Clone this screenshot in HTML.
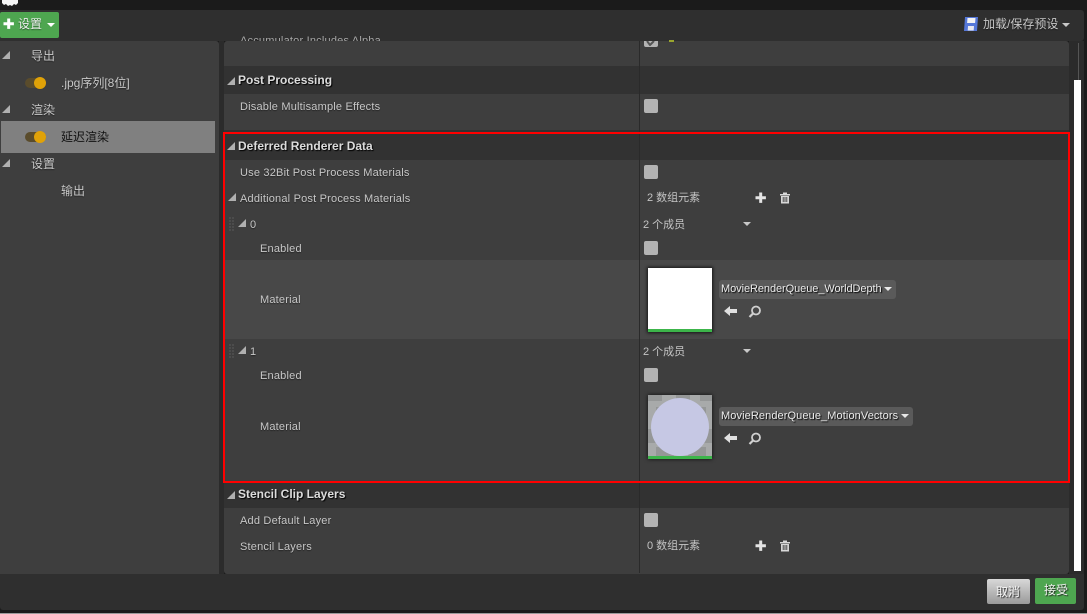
<!DOCTYPE html>
<html><head><meta charset="utf-8">
<style>
html,body{margin:0;padding:0;background:#1b1b1b;}
#r{position:relative;width:1087px;height:614px;overflow:hidden;background:#1b1b1b;font-family:"Liberation Sans","Noto Sans CJK SC",sans-serif;font-size:11px;color:#c8c8c8;}
#r div,#r span.a,#r svg{position:absolute;}
.t{white-space:nowrap;line-height:14px;text-shadow:0 1px 1px rgba(0,0,0,.45);}
.w{letter-spacing:.2px;}
.h{font-weight:bold;font-size:12px;color:#dcdcdc;text-shadow:1px 1px 1px #000;white-space:nowrap;line-height:14px;}
.c{font-size:12px;color:#c4c4c4;white-space:nowrap;line-height:16px;}
.sec{left:224px;width:845px;background:#323232;}
.row{left:224px;width:845px;background:#3e3e3e;}
.cb{width:14px;height:14px;background:#b3b3b3;border-radius:2px;left:644px;}
.tri{width:0;height:0;border-style:solid;border-width:0 0 8px 8px;border-color:transparent transparent #b0b0b0 transparent;}
.dn{width:0;height:0;border-style:solid;border-width:4px 4px 0 4px;border-color:#c8c8c8 transparent transparent transparent;}
.sw{width:21px;height:10px;border-radius:5px;background:#5a4c2c;}
.sw2{width:12px;height:12px;border-radius:6px;background:#e0a208;}
.lbl{font-size:11px;color:#ececec;text-shadow:1px 1px 1px #000;white-space:nowrap;line-height:14px;}
.drop{background:#5a5a5a;border-radius:3px;height:19px;}
</style></head><body><div id="r">

<!-- logo fragment -->
<svg style="left:0;top:0" width="20" height="8"><path d="M2 0h16v3l-2 2-2-1-2 2-2-1-2 1-2-2-2 1-2-2z" fill="#f4f4f4"/></svg>

<!-- toolbar -->
<div style="left:0;top:10px;width:1084px;height:31px;background:#2f2f2f;border-radius:0 3px 3px 0"></div>
<div style="left:0;top:12px;width:59px;height:26px;background:#4ea650;border-radius:2px;"></div>
<svg style="left:3px;top:18px" width="12" height="12"><path d="M4.200.5h3v3.700h3.700v3h-3.700v3.700h-3v-3.700H.5v-3h3.700z" fill="#fff"/></svg>
<div class="t" style="left:18px;top:17px;font-size:12px;color:#eee">设置</div>
<div class="dn" style="left:47px;top:23px;border-color:#fff transparent transparent transparent"></div>

<svg style="left:963px;top:16px" width="16" height="16"><path d="M2 1h13l-1 14H1z" fill="#5577d8"/><path d="M4.500 2h8l-.4 5h-8z" fill="#f4f4f4"/><path d="M5 10h6l-.3 4.500H4.700z" fill="#e8e8f0"/></svg>
<div class="t" style="left:983px;top:17px;font-size:12px;color:#c8c8c8">加载/保存预设</div>
<div class="dn" style="left:1062px;top:23px;"></div>

<!-- left panel -->
<div style="left:0;top:41px;width:219px;height:533px;background:#3e3e3e;border-radius:0 3px 0 0"></div>
<div style="left:219px;top:41px;width:5px;height:533px;background:#2b2b2b"></div>
<div style="left:1px;top:121px;width:214px;height:32px;background:#808080"></div>
<div class="tri" style="left:2px;top:51px"></div>
<div class="t" style="left:31px;top:49px;font-size:12px">导出</div>
<div class="sw" style="left:25px;top:78px"></div><div class="sw2" style="left:34px;top:77px"></div>
<div class="t" style="left:61px;top:76px;font-size:12px;">.jpg序列[8位]</div>
<div class="tri" style="left:2px;top:105px"></div>
<div class="t" style="left:31px;top:103px;font-size:12px">渲染</div>
<div class="sw" style="left:25px;top:132px"></div><div class="sw2" style="left:34px;top:131px"></div>
<div class="t" style="left:61px;top:130px;font-size:12px;color:#111;text-shadow:none">延迟渲染</div>
<div class="tri" style="left:2px;top:159px"></div>
<div class="t" style="left:31px;top:157px;font-size:12px">设置</div>
<div class="t" style="left:61px;top:184px;font-size:12px">输出</div>

<!-- right side background -->
<div style="left:224px;top:41px;width:845px;height:533px;background:#3e3e3e;border-radius:3px"></div>
<div style="left:1069px;top:41px;width:15px;height:533px;background:#2b2b2b"></div>

<!-- Top clipped row -->
<div class="t w" style="left:240px;top:34px;color:#a8a8a8;height:7px;overflow:hidden;line-height:14px;">Accumulator Includes Alpha</div>
<div style="left:644px;top:41px;width:14px;height:6px;background:#b3b3b3;border-radius:0 0 2px 2px"></div>
<svg style="left:646px;top:41px" width="10" height="5"><path d="M1 0l3 4 4-4" stroke="#555" stroke-width="2" fill="none"/></svg>
<div style="left:669px;top:40px;width:5px;height:2px;background:#9aa52e"></div>

<!-- Sections -->
<div class="sec" style="top:66px;height:28px;"></div>
<div class="tri" style="left:227px;top:77px;"></div>
<div class="h" style="left:238px;top:73px">Post Processing</div>
<div class="t w" style="left:240px;top:100px">Disable Multisample Effects</div>
<div class="cb" style="top:99px"></div>

<div class="sec" style="top:130px;height:30px;"></div>
<div class="tri" style="left:227px;top:142px;"></div>
<div class="h" style="left:238px;top:139px">Deferred Renderer Data</div>
<div class="t w" style="left:240px;top:166px">Use 32Bit Post Process Materials</div>
<div class="cb" style="top:165px"></div>

<div class="tri" style="left:228px;top:193px;"></div>
<div class="t w" style="left:240px;top:192px">Additional Post Process Materials</div>
<div class="c" style="left:647px;top:190px;font-size:11px">2 数组元素</div>
<svg style="left:755px;top:192px" width="12" height="12"><path d="M4.200.5h3v3.700h3.700v3h-3.700v3.700h-3v-3.700H.5v-3h3.700z" fill="#e4e4e4"/></svg>
<svg style="left:779px;top:192px" width="12" height="12"><path d="M1 2h10v1.500H1zM4 .5h4V2H4zM2 4h8v7.500H2z" fill="#d8d8d8"/><path d="M4.200 5v5M6 5v5M7.800 5v5" stroke="#3e3e3e" stroke-width=".9"/></svg>

<!-- item 0 -->
<svg style="left:229px;top:217px" width="6" height="15"><path d="M.5 1h1M3.500 1h1M.5 4h1M3.500 4h1M.5 7h1M3.500 7h1M.5 10h1M3.500 10h1M.5 13h1M3.500 13h1" stroke="#777" stroke-width="1"/></svg>
<div class="tri" style="left:238px;top:219px;"></div>
<div class="t" style="left:250px;top:218px">0</div>
<div class="c" style="left:643px;top:217px;font-size:11px">2 个成员</div>
<div class="dn" style="left:743px;top:222px"></div>
<div class="t w" style="left:260px;top:242px">Enabled</div>
<div class="cb" style="top:241px"></div>

<div class="row" style="top:260px;height:79px;background:#484848"></div>
<div class="t w" style="left:260px;top:293px">Material</div>
<div style="left:648px;top:268px;width:64px;height:64px;background:#fff;box-shadow:0 0 3px 1px rgba(0,0,0,.7)"></div>
<div style="left:648px;top:329px;width:64px;height:3px;background:#3cb54a"></div>
<div class="drop" style="left:719px;top:280px;width:177px"></div>
<div class="lbl" style="left:721px;top:282px;letter-spacing:-.07px">MovieRenderQueue_WorldDepth</div>
<div class="dn" style="left:884px;top:287px;border-color:#e8e8e8 transparent transparent transparent"></div>
<svg style="left:724px;top:305px" width="14" height="12"><path d="M0 6l6-5v3h7v4H6v3z" fill="#e0e0e0"/></svg>
<svg style="left:748px;top:305px" width="14" height="14"><circle cx="8" cy="5.500" r="4" fill="none" stroke="#d0d0d0" stroke-width="1.800"/><path d="M5 8.500L1.500 12" stroke="#d0d0d0" stroke-width="2.200"/></svg>

<!-- item 1 -->
<svg style="left:229px;top:344px" width="6" height="15"><path d="M.5 1h1M3.500 1h1M.5 4h1M3.500 4h1M.5 7h1M3.500 7h1M.5 10h1M3.500 10h1M.5 13h1M3.500 13h1" stroke="#777" stroke-width="1"/></svg>
<div class="tri" style="left:238px;top:346px;"></div>
<div class="t" style="left:250px;top:345px">1</div>
<div class="c" style="left:643px;top:344px;font-size:11px">2 个成员</div>
<div class="dn" style="left:743px;top:349px"></div>
<div class="t w" style="left:260px;top:369px">Enabled</div>
<div class="cb" style="top:368px"></div>
<div class="t w" style="left:260px;top:420px">Material</div>

<svg style="left:648px;top:395px;filter:drop-shadow(0 0 2px rgba(0,0,0,.8))" width="64" height="64">
<rect width="64" height="64" fill="#a8aaaa"/>
<path d="M0 0h14v6H0zM28 0h14v6H28zM52 0h12v6H52zM8 12h14v10H8zM44 12h14v10H44zM0 34h10v14H0zM54 34h10v14H54zM8 52h18v9H8zM40 52h18v9H40z" fill="#959797"/>
<circle cx="32" cy="32" r="29" fill="#c6c8e4"/>
<rect x="0" y="61" width="64" height="3" fill="#3cb54a"/>
</svg>
<div class="drop" style="left:719px;top:407px;width:194px"></div>
<div class="lbl" style="left:721px;top:409px;letter-spacing:.1px">MovieRenderQueue_MotionVectors</div>
<div class="dn" style="left:901px;top:414px;border-color:#e8e8e8 transparent transparent transparent"></div>
<svg style="left:724px;top:432px" width="14" height="12"><path d="M0 6l6-5v3h7v4H6v3z" fill="#e0e0e0"/></svg>
<svg style="left:748px;top:432px" width="14" height="14"><circle cx="8" cy="5.500" r="4" fill="none" stroke="#d0d0d0" stroke-width="1.800"/><path d="M5 8.500L1.500 12" stroke="#d0d0d0" stroke-width="2.200"/></svg>

<!-- stencil -->
<div class="sec" style="top:481px;height:27px;"></div>
<div class="tri" style="left:227px;top:491px;"></div>
<div class="h" style="left:238px;top:487px">Stencil Clip Layers</div>
<div class="t w" style="left:240px;top:514px">Add Default Layer</div>
<div class="cb" style="top:513px"></div>
<div class="t w" style="left:240px;top:540px">Stencil Layers</div>
<div class="c" style="left:647px;top:538px;font-size:11px">0 数组元素</div>
<svg style="left:755px;top:540px" width="12" height="12"><path d="M4.200.5h3v3.700h3.700v3h-3.700v3.700h-3v-3.700H.5v-3h3.700z" fill="#e4e4e4"/></svg>
<svg style="left:779px;top:540px" width="12" height="12"><path d="M1 2h10v1.500H1zM4 .5h4V2H4zM2 4h8v7.500H2z" fill="#d8d8d8"/><path d="M4.200 5v5M6 5v5M7.800 5v5" stroke="#3e3e3e" stroke-width=".9"/></svg>

<!-- divider -->
<div style="left:639px;top:41px;width:1px;height:532px;background:#2a2a2a"></div>

<!-- red box -->
<div style="left:223px;top:132px;width:843px;height:347px;border:2px solid #f00"></div>

<!-- scrollbar -->
<div style="left:1078px;top:43px;width:1px;height:37px;background:#555"></div>
<div style="left:1074px;top:80px;width:7px;height:491px;background:#fff"></div>

<!-- bottom bar -->
<div style="left:0;top:574px;width:1084px;height:36px;background:#2f2f2f;border-radius:0 0 3px 3px"></div>
<div style="left:987px;top:579px;width:43px;height:25px;background:linear-gradient(#d8d8d8,#9a9a9a);border-radius:2px;"></div>
<div class="t" style="left:996px;top:585px;font-size:12px;color:#f8f8f8;text-shadow:1px 1px 1px #222">取消</div>
<div style="left:1035px;top:578px;width:41px;height:26px;background:#4ea650;border-radius:2px;"></div>
<div class="t" style="left:1044px;top:583px;font-size:12px;color:#f4f4f4;text-shadow:1px 1px 1px #222">接受</div>
<div style="left:0;top:613px;width:1087px;height:1px;background:#9a9a9a"></div>

</div></body></html>
